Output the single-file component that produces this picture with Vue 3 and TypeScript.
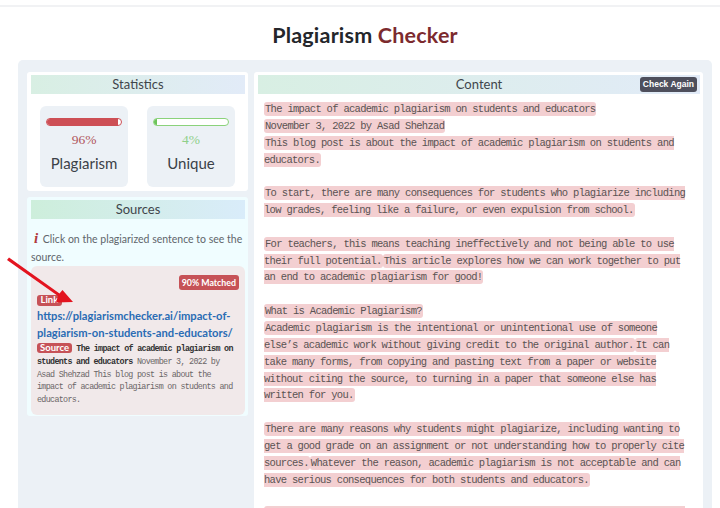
<script setup lang="ts">
const paragraphs: string[][][] = [
  [['The impact of academic plagiarism on students and educators'], ['November 3, 2022 by Asad Shehzad'], ['This blog post is about the impact of academic plagiarism on students and educators.']],
  [['To start, there are many consequences for students who plagiarize including low grades, feeling like a failure, or even expulsion from school.']],
  [['For teachers, this means teaching ineffectively and not being able to use their full potential.', 'This article explores how we can work together to put an end to academic plagiarism for good!']],
  [['What is Academic Plagiarism?'], ['Academic plagiarism is the intentional or unintentional use of someone else’s academic work without giving credit to the original author.', 'It can take many forms, from copying and pasting text from a paper or website without citing the source, to turning in a paper that someone else has written for you.']],
  [['There are many reasons why students might plagiarize, including wanting to get a good grade on an assignment or not understanding how to properly cite sources.', 'Whatever the reason, academic plagiarism is not acceptable and can have serious consequences for both students and educators.']],
  [['The consequences of academic plagiarism can be severe for both students and educators.']]
]
</script>

<template>
  <div class="page">
    <div class="topline"></div>
    <h1 class="title">Plagiarism <span class="accent">Checker</span></h1>
    <main class="panel">
      <aside class="left">
        <section class="card stats">
          <h2 class="strip">Statistics</h2>
          <div class="tiles">
            <div class="tile">
              <div class="bar red"><div class="fill red-fill" style="width: 96%"></div></div>
              <div class="pct pct-red">96%</div>
              <div class="label">Plagiarism</div>
            </div>
            <div class="tile">
              <div class="bar green"><div class="fill green-fill" style="width: 4%"></div></div>
              <div class="pct pct-green">4%</div>
              <div class="label">Unique</div>
            </div>
          </div>
        </section>
        <section class="card sources">
          <h2 class="strip strip-src">Sources</h2>
          <p class="info"><span class="i">i</span> Click on the plagiarized sentence to see the source.</p>
          <div class="srcbox">
            <div class="matchrow"><span class="matched">90% Matched</span></div>
            <div class="tagrow"><span class="tag">Link</span></div>
            <a class="link">https://plagiarismchecker.ai/impact-of-plagiarism-on-students-and-educators/</a>
            <p class="srctext"><span class="tag tag-src">Source</span> <b>The impact of academic plagiarism on students and educators</b> November 3, 2022 by Asad Shehzad This blog post is about the impact of academic plagiarism on students and educators.</p>
          </div>
        </section>
      </aside>
      <section class="card content">
        <div class="strip strip-content">
          <h2>Content</h2>
          <button class="again">Check Again</button>
        </div>
        <div class="body">
          <p v-for="(para, i) in paragraphs" :key="i" class="para">
            <template v-for="(line, j) in para" :key="j"><template v-for="(s, k) in line" :key="k"><span class="hl">{{ s }}</span></template><br v-if="j < para.length - 1"></template>
          </p>
        </div>
      </section>
    </main>
    <svg class="arrow" width="80" height="60" viewBox="0 0 80 60" aria-hidden="true">
      <path d="M7 8 L9 5.500 L59.500 41.500 L62.500 38 L73 50 L56 50.500 L58 44 Z" fill="#e3141f"/>
    </svg>
  </div>
</template>

<style>
html, body { margin: 0; padding: 0; background: #fff; overflow: hidden; }
</style>

<style scoped>
.page { position: relative; width: 720px; height: 508px; overflow: hidden; background: #fff; font-family: Lato, "Open Sans", sans-serif; color: #3b4148; }
.topline { height: 2px; margin-top: 5px; background: #f1f2f4; }
.title { margin: 0; height: 53px; padding: 15px 0 0 10px; box-sizing: border-box; text-align: center; font-size: 21.500px; line-height: 26px; font-weight: 700; color: #24262b; letter-spacing: 0.200px; }
.accent { color: #7c2a2e; }
.panel { margin: 0 8px 0 18px; padding: 12px 9px 0; height: 448px; box-sizing: border-box; background: #ecf1f6; border-radius: 5px 5px 0 0; display: flex; gap: 6px; align-items: flex-start; }
.left { width: 221px; flex: none; display: flex; flex-direction: column; gap: 6px; }
.card { background: #fff; border-radius: 3px; padding: 3px; box-sizing: border-box; }
.strip { margin: 0; height: 19px; line-height: 19px; text-align: center; font-size: 13px; font-weight: 400; color: #3f454b; background: linear-gradient(90deg, #d8efe3, #e2ebf8); }
.strip-src { background: linear-gradient(90deg, #cdeedb, #d9ecfa); }
.stats { height: 119px; padding-right: 3px; padding-left: 4px; }
.tiles { display: flex; gap: 19px; padding: 12px 9px 0; }
.tile { width: 88px; height: 81px; background: #ecf1f6; border-radius: 6px; box-sizing: border-box; padding: 12px 6px 0; text-align: center; }
.bar { height: 8px; border-radius: 4px; box-sizing: border-box; background: #fff; overflow: hidden; }
.bar.red { border: 1px solid #cd4f55; }
.bar.green { border: 1px solid #8bd27b; }
.fill { height: 100%; }
.red-fill { background: #cd4f55; }
.green-fill { background: #6cc45a; min-width: 3px; }
.pct { font-family: "Liberation Serif", serif; font-size: 13.500px; line-height: 16px; margin-top: 6px; }
.pct-red { color: #b0555c; }
.pct-green { color: #8fd08a; }
.label { font-size: 15px; line-height: 18px; margin-top: 6px; color: #3b4148; }
.sources { height: 219px; background: #f0fdff; padding-left: 4px; }
.info { margin: 0; padding: 11px 0 0; font-size: 10.500px; line-height: 17.500px; color: #5f656b; }
.i { font-family: "Liberation Serif", serif; font-style: italic; font-weight: 700; font-size: 15px; color: #b03a3e; padding: 0 2px 0 3px; }
.srcbox { margin-top: 0; height: 149px; box-sizing: border-box; background: #f1e9ea; border-radius: 6px; padding: 9px 6px 0; }
.matchrow { display: flex; justify-content: flex-end; height: 15px; }
.matched { background: #c65257; color: #fff; font-size: 8.800px; font-weight: 700; line-height: 15px; height: 15px; padding: 0 3px; border-radius: 3px; }
.tagrow { display: flex; height: 11px; margin-top: 5px; }
.tag { display: inline-block; background: #c65257; color: #fff; font-size: 9.500px; font-weight: 700; line-height: 10px; padding: 0 3.500px; border-radius: 3px; }
.tag-src { padding: 0 3px; font-family: Lato, sans-serif; letter-spacing: 0; }
.link { display: block; margin-top: 2px; color: #2a6cb4; font-size: 11.200px; font-weight: 700; line-height: 16.700px; width: 204px; overflow-wrap: normal; }
.srctext { margin: 1.500px 0 0; font-family: "Liberation Mono", monospace; font-size: 8.400px; letter-spacing: -0.680px; line-height: 12.800px; color: #6b6667; }
.srctext b { color: #333; }
.content { flex: 1; height: 448px; padding: 3px 3px 0 4px; }
.strip-content { position: relative; background: linear-gradient(90deg, #d8efe3, #e2ebf8); }
.strip-content h2 { margin: 0; font: inherit; color: #3f454b; }
.again { position: absolute; right: 3px; top: 2px; height: 15px; padding: 0 3px; border: 0; border-radius: 3px; background: #4e4f5c; color: #fff; font-family: "Liberation Sans", sans-serif; font-size: 8.500px; font-weight: 700; line-height: 15px; }
.body { padding: 7px 6px 0 6px; font-family: "Liberation Mono", monospace; font-size: 10.500px; letter-spacing: -0.700px; line-height: 16.850px; color: #5a5353; }
.para { margin: 0 0 16.850px; }
.hl { background: #f3cfd1; border-radius: 3px; padding: 1px; }
.arrow { position: absolute; left: 0; top: 252px; }
</style>
